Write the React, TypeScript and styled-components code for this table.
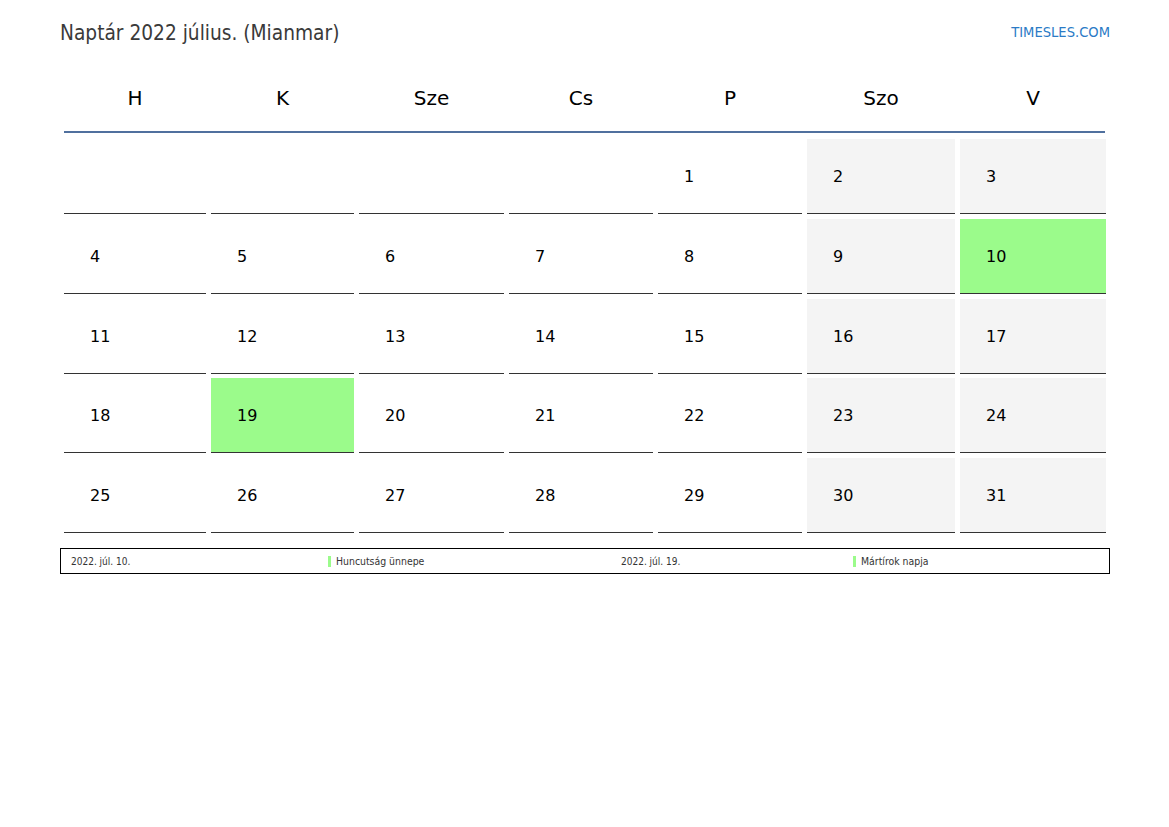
import { createGlobalStyle, styled } from 'styled-components';

const GlobalStyle = createGlobalStyle`
  body {
    margin: 0;
    background: #ffffff;
    font-family: 'DejaVu Sans', 'Liberation Sans', sans-serif;
  }
`;

const CONDENSED = `'DejaVu Sans Condensed', 'DejaVu Sans', 'Liberation Sans Narrow', sans-serif`;

const WEEKDAYS = ['H', 'K', 'Sze', 'Cs', 'P', 'Szo', 'V'];
const HOLIDAYS = [10, 19];
const LEGEND = [
  { date: '2022. júl. 10.', name: 'Huncutság ünnepe' },
  { date: '2022. júl. 19.', name: 'Mártírok napja' },
];

// July 2022 starts on Friday (index 4)
const buildWeeks = () => {
  const cells: (number | null)[] = [];
  for (let i = 0; i < 4; i++) cells.push(null);
  for (let d = 1; d <= 31; d++) cells.push(d);
  while (cells.length % 7 !== 0) cells.push(null);
  return cells;
};

const App = () => {
  const cells = buildWeeks();

  return (
    <S.Page>
      <GlobalStyle />
      <S.TopBar>
        <S.Title>Naptár 2022 július. (Mianmar)</S.Title>
        <S.SiteLink>TIMESLES.COM</S.SiteLink>
      </S.TopBar>
      <S.Calendar>
        <S.HeadRow>
          {WEEKDAYS.map((d) => (
            <S.HeadCell key={d}>{d}</S.HeadCell>
          ))}
        </S.HeadRow>
        <S.Body>
          {cells.map((day, i) => {
            const col = i % 7;
            const tone = day && HOLIDAYS.includes(day) ? 'holiday' : col >= 5 ? 'weekend' : 'plain';
            return (
              <S.DayCell key={i} $tone={tone}>
                {day}
              </S.DayCell>
            );
          })}
        </S.Body>
      </S.Calendar>
      <S.Legend>
        {LEGEND.map((h) => (
          <S.LegendPair key={h.date}>
            <S.LegendDate>{h.date}</S.LegendDate>
            <S.LegendName>{h.name}</S.LegendName>
          </S.LegendPair>
        ))}
      </S.Legend>
    </S.Page>
  );
};

const COLUMNS = '142px 143px 145px 144px 144px 148px 146px';

const S = {
  Page: styled.div`
    width: 1050px;
    padding: 0 59px 0 60px;
  `,

  TopBar: styled.header`
    display: flex;
    justify-content: space-between;
    align-items: center;

    height: 26px;
    padding-top: 20px;
  `,

  Title: styled.h1`
    margin: 0;

    color: #3a3a3a;
    font-family: ${CONDENSED};
    font-size: 20.7px;
    font-weight: normal;
  `,

  SiteLink: styled.span`
    margin-top: -3px;

    color: #2b7bc6;
    font-family: ${CONDENSED};
    font-size: 14.6px;
  `,

  Calendar: styled.section`
    margin: 19px 5px 0 4px;
  `,

  HeadRow: styled.div`
    display: grid;
    grid-template-columns: ${COLUMNS};
    column-gap: 5px;

    height: 66px;
    border-bottom: 2px solid #50709e;
  `,

  HeadCell: styled.div`
    display: flex;
    align-items: center;
    justify-content: center;

    color: #000;
    font-size: 20px;
  `,

  Body: styled.div`
    display: grid;
    grid-template-columns: ${COLUMNS};
    grid-auto-rows: 75px;
    gap: 4.75px 5px;

    margin-top: 6px;
  `,

  DayCell: styled.div<{ $tone: 'plain' | 'weekend' | 'holiday' }>`
    display: flex;
    align-items: center;
    box-sizing: border-box;

    padding: 1px 0 0 26px;
    border-bottom: 1px solid #333;

    background: ${({ $tone }) =>
      $tone === 'holiday' ? '#9bfb8b' : $tone === 'weekend' ? '#f4f4f4' : '#ffffff'};
    color: #000;
    font-size: 16px;
  `,

  Legend: styled.footer`
    display: grid;
    grid-template-columns: 267px 283px 242px 1fr;
    align-items: center;

    height: 24px;
    margin-top: 15px;
    border: 1px solid #000;
  `,

  LegendPair: styled.div`
    display: contents;
  `,

  LegendDate: styled.span`
    padding-left: 10px;

    color: #333;
    font-family: ${CONDENSED};
    font-size: 10px;
  `,

  LegendName: styled.span`
    display: flex;
    align-items: center;
    gap: 5px;

    color: #333;
    font-family: ${CONDENSED};
    font-size: 10.4px;

    &::before {
      content: '';
      width: 3px;
      height: 11px;
      background: #9bfb8b;
    }
  `,
};

export default App;
